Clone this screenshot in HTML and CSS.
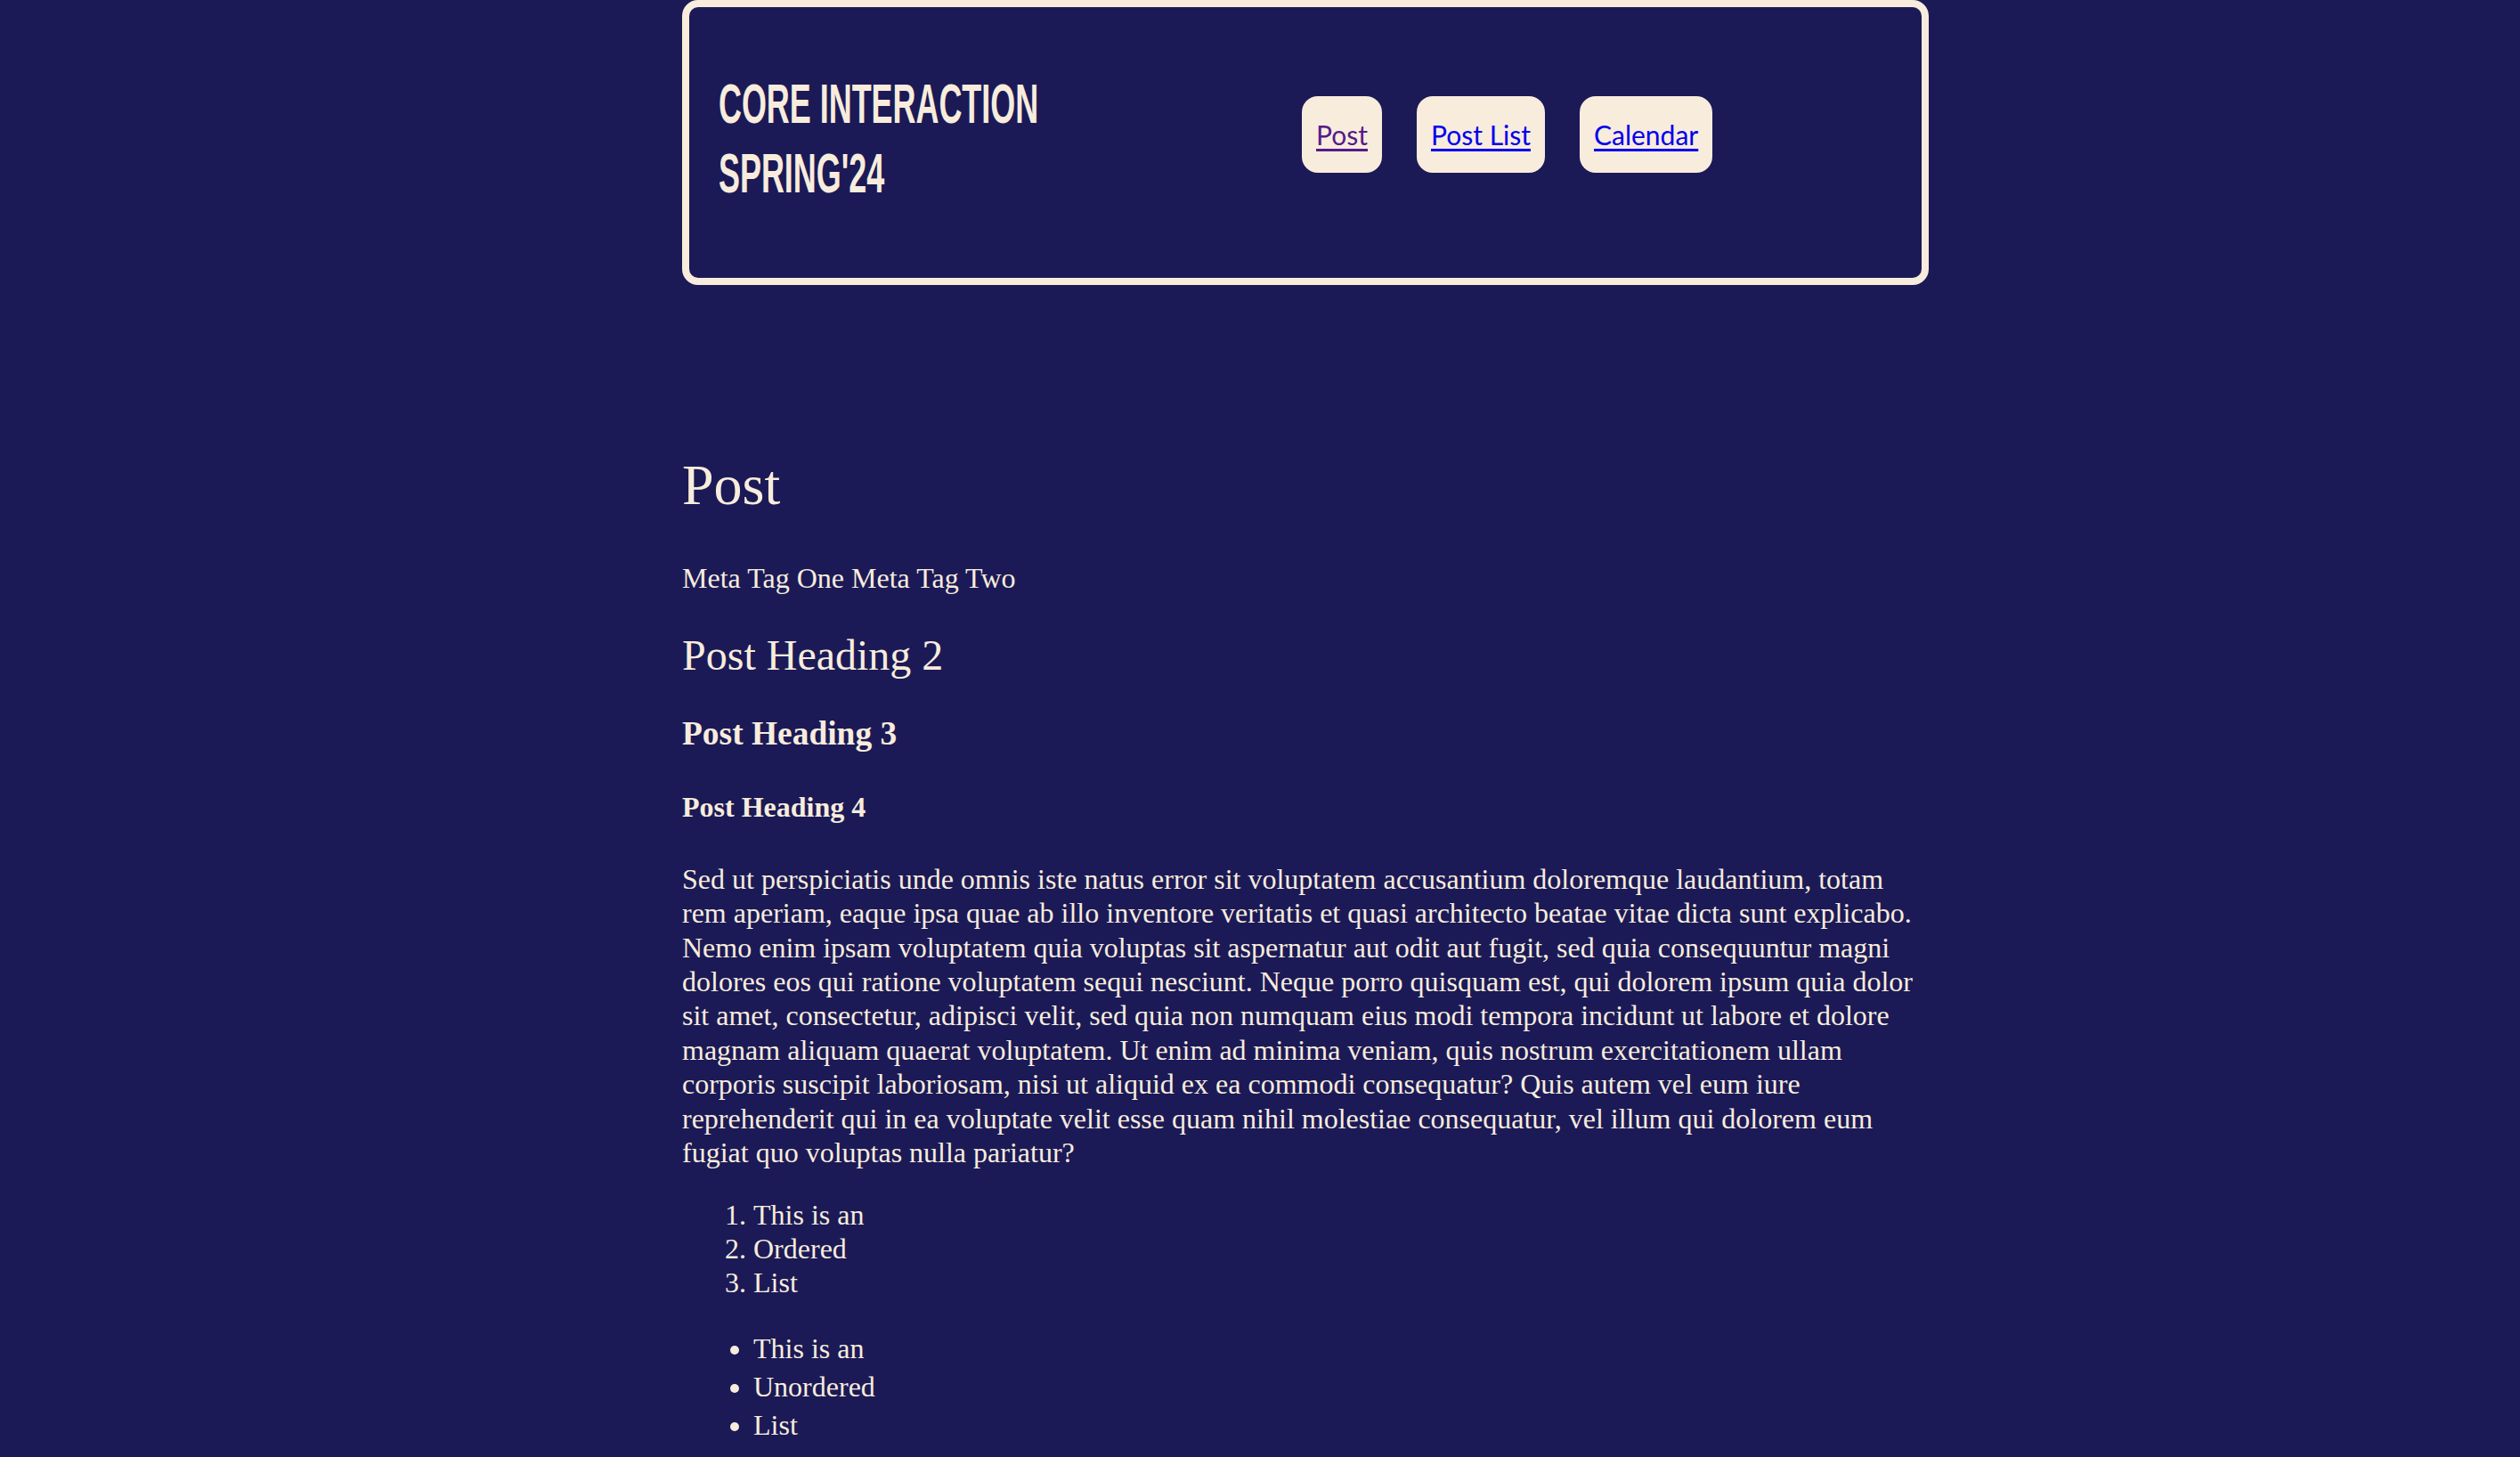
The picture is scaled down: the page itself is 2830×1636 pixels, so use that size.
FILE: index.html
```html
<!DOCTYPE html>
<html lang="en">
<head>
<meta charset="utf-8">
<title>Post</title>
<link rel="stylesheet" href="styles.css">
</head>
<body>
<div class="page">
  <header class="site-header">
    <h1 class="site-title"><span>Core Interaction</span><span>Spring'24</span></h1>
    <nav class="site-nav">
      <a class="nav-link visited" href="#post">Post</a>
      <a class="nav-link" href="#post-list">Post List</a>
      <a class="nav-link" href="#calendar">Calendar</a>
    </nav>
  </header>
  <main class="post">
    <h1 class="post-title">Post</h1>
    <p class="post-meta">Meta Tag One Meta Tag Two</p>
    <h2 class="post-h2">Post Heading 2</h2>
    <h3 class="post-h3">Post Heading 3</h3>
    <h4 class="post-h4">Post Heading 4</h4>
    <p class="post-body">Sed ut perspiciatis unde omnis iste natus error sit voluptatem accusantium doloremque laudantium, totam rem aperiam, eaque ipsa quae ab illo inventore veritatis et quasi architecto beatae vitae dicta sunt explicabo. Nemo enim ipsam voluptatem quia voluptas sit aspernatur aut odit aut fugit, sed quia consequuntur magni dolores eos qui ratione voluptatem sequi nesciunt. Neque porro quisquam est, qui dolorem ipsum quia dolor sit amet, consectetur, adipisci velit, sed quia non numquam eius modi tempora incidunt ut labore et dolore magnam aliquam quaerat voluptatem. Ut enim ad minima veniam, quis nostrum exercitationem ullam corporis suscipit laboriosam, nisi ut aliquid ex ea commodi consequatur? Quis autem vel eum iure reprehenderit qui in ea voluptate velit esse quam nihil molestiae consequatur, vel illum qui dolorem eum fugiat quo voluptas nulla pariatur?</p>
    <ol class="post-ol">
      <li>This is an</li>
      <li>Ordered</li>
      <li>List</li>
    </ol>
    <ul class="post-ul">
      <li>This is an</li>
      <li>Unordered</li>
      <li>List</li>
    </ul>
  </main>
</div>
</body>
</html>
```

FILE: styles.css
```css
html, body {
  background: #1b1a57;
}

body {
  margin: 0;
  color: #f8ecdc;
  font-family: "Liberation Serif", "Times New Roman", serif;
  font-size: 32px;
  line-height: 1.2;
}

.page {
  width: 1400px;
  margin-left: 766px;
}

/* Header */
.site-header {
  box-sizing: border-box;
  height: 320px;
  border: 8px solid #f8ecdc;
  border-radius: 18px;
  display: grid;
  grid-template-columns: 655px auto;
  align-items: center;
  padding: 0 33px 18px;
}

.site-title {
  margin: 0;
  padding-top: 8px;
  font-family: "Liberation Sans", Arial, sans-serif;
  font-weight: 700;
  font-size: 63px;
  line-height: 78px;
  text-transform: uppercase;
  white-space: nowrap;
  transform: scaleX(0.57);
  transform-origin: left center;
}

.site-title span {
  display: block;
}

.site-nav {
  display: flex;
  gap: 39px;
}

.nav-link {
  box-sizing: border-box;
  display: flex;
  align-items: center;
  height: 86px;
  padding: 0 16px;
  background: #f8ecdc;
  border-radius: 18px;
  font-family: Lato, "Open Sans", sans-serif;
  font-size: 30px;
  color: #0000ee;
  text-decoration: underline;
  text-underline-offset: 4px;
}

.nav-link.visited {
  color: #551a8b;
}

/* Post */
.post {
  padding-top: 187px;
}

.post-title {
  margin: 0;
  font-size: 64px;
  font-weight: 400;
}

.post-meta {
  margin: 46px 0 0;
}

.post-h2 {
  margin: 38.6px 0 0;
  font-size: 48px;
  font-weight: 400;
}

.post-h3 {
  margin: 37.3px 0 0;
  font-size: 37.44px;
  font-weight: 700;
}

.post-h4 {
  margin: 40.2px 0 0;
  font-size: 32px;
  font-weight: 700;
}

.post-body {
  margin: 42.6px 0 0;
}

.post-ol {
  margin: 31.4px 0 0;
  padding-left: 80px;
}

.post-ul {
  margin: 33.5px 0 0;
  padding-left: 80px;
}

.post-ul li {
  line-height: 43px;
}
```
